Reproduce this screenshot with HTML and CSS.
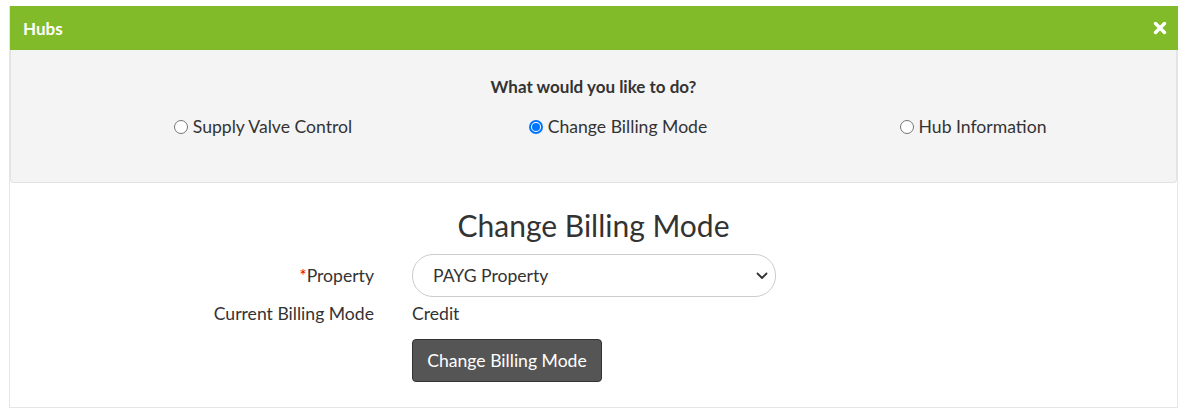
FILE: index.html
```html
<!DOCTYPE html>
<html>
<head>
<meta charset="utf-8">
<link rel="stylesheet" href="styles.css">
</head>
<body>
<div class="modal">
  <div class="modal-header">
    <span class="title">Hubs</span>
    <svg class="close" width="14" height="14" viewBox="0 0 14 14"><path d="M2.5 2.5 L11.5 11.5 M11.5 2.5 L2.5 11.5" stroke="#fff" stroke-width="3.4" stroke-linecap="round"/></svg>
  </div>
  <div class="choice-panel">
    <div class="question">What would you like to do?</div>
    <div class="options">
      <label class="option"><span class="radio"></span>Supply Valve Control</label>
      <label class="option"><span class="radio checked"></span>Change Billing Mode</label>
      <label class="option"><span class="radio"></span>Hub Information</label>
    </div>
  </div>
  <div class="content">
    <h2 class="heading">Change Billing Mode</h2>
    <div class="form">
      <div class="label"><span class="req">*</span>Property</div>
      <div class="select">
        <span>PAYG Property</span>
        <svg class="chev" width="12" height="8" viewBox="0 0 12 8"><path d="M1.5 1.5 L6 6 L10.5 1.5" fill="none" stroke="#333" stroke-width="1.8" stroke-linecap="round" stroke-linejoin="round"/></svg>
      </div>
      <div class="label second">Current Billing Mode</div>
      <div class="value">Credit</div>
      <div></div>
      <div><button class="btn">Change Billing Mode</button></div>
    </div>
  </div>
</div>
</body>
</html>
```
FILE: styles.css
```css
* { box-sizing: border-box; }
html, body { margin: 0; padding: 0; background: #fff; }
body {
  font-family: Lato, "Open Sans", sans-serif;
  color: #333;
  font-size: 17.6px;
}
.modal {
  margin: 6px 16px 0 9px;
  border: 1px solid #e6e6e6;
  border-top: none;
  height: 402px;
}
.modal-header {
  background: #82bb29;
  height: 44px;
  display: flex;
  align-items: center;
  justify-content: space-between;
  padding: 0 11px 0 13px;
  margin: 0 -1px 0 0;
}
.title {
  color: #fff;
  font-weight: 700;
  font-size: 17px;
}
.close { display: block; }
.choice-panel {
  background: #f4f4f4;
  border: 1px solid #e2e2e2;
  border-top: none;
  border-radius: 0 0 4px 4px;
  height: 133px;
  padding-top: 26px;
}
.question {
  text-align: center;
  font-weight: 700;
  font-size: 17px;
  line-height: 22px;
}
.options {
  display: grid;
  grid-template-columns: repeat(3, 355px);
  justify-content: center;
  padding-left: 49px;
  margin-top: 18px;
}
.option {
  display: flex;
  align-items: center;
  justify-content: center;
  line-height: 22px;
}
.radio {
  width: 14px;
  height: 14px;
  border: 1px solid #767676;
  border-radius: 50%;
  background: #fff;
  margin-right: 5px;
  position: relative;
}
.radio.checked {
  border: 2px solid #0075ff;
}
.radio.checked::after {
  content: "";
  position: absolute;
  left: 1px; top: 1px;
  width: 8px; height: 8px;
  border-radius: 50%;
  background: #0075ff;
}
.content {
  padding-top: 23px;
}
.heading {
  margin: 0;
  text-align: center;
  font-weight: 400;
  font-size: 30px;
  line-height: 38px;
  color: #333;
}
.form {
  display: grid;
  grid-template-columns: 364px 364px;
  column-gap: 38px;
  align-items: center;
  margin-top: 10px;
}
.label {
  text-align: right;
}
.req { color: #e00; }
.select {
  height: 43px;
  border: 1px solid #ccc;
  border-radius: 21px;
  display: flex;
  align-items: center;
  justify-content: space-between;
  padding: 0 6px 0 20px;
}
.chev { margin-right: 1px; }
.second, .value { margin-top: 6px; line-height: 22px; }
.btn {
  margin-top: 14px;
  height: 43px;
  width: 190px;
  background: #555;
  color: #fff;
  border: 1px solid #333;
  border-radius: 4px;
  font-family: Lato, sans-serif;
  font-size: 17.6px;
  padding: 0;
}
```
